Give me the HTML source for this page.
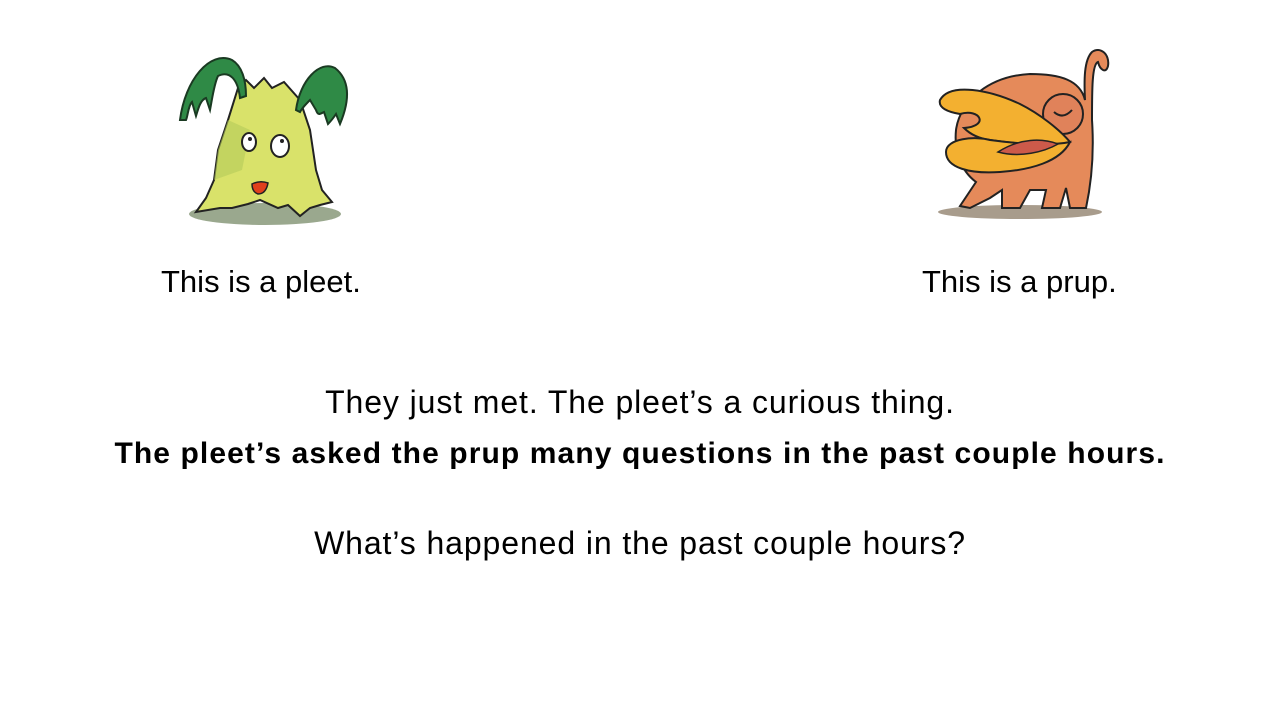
<!DOCTYPE html>
<html><head><meta charset="utf-8"><style>
body{margin:0;width:1280px;height:720px;background:#fff;position:relative;overflow:hidden;font-family:"Liberation Sans",Arial,sans-serif;color:#000}
.t{position:absolute;white-space:nowrap;font-size:32px;line-height:1;letter-spacing:0.9px}
.c{left:0;width:1280px;text-align:center}
</style></head><body>
<svg style="position:absolute;left:160px;top:40px" width="200" height="190" viewBox="0 0 200 190">
<ellipse cx="105" cy="174" rx="76" ry="11" fill="#9aa88e"/>
<path d="M78 48 L86 40 L94 48 L104 38 L112 48 L124 42 L140 60 L150 90 L156 130 L162 150 L172 162 L160 165 L150 168 L140 176 L128 165 L118 168 L100 160 L88 164 L72 168 L60 168 L36 172 L46 158 L54 140 L58 110 L68 80 Z" fill="#d9e26a" stroke="#222" stroke-width="2"/>
<path d="M68 80 L58 110 L54 140 L82 130 L90 90 Z" fill="#b4cc5a" opacity=".6"/>
<path d="M20 80 C25 40 50 10 72 20 C82 26 86 40 86 56 L80 58 C78 40 70 30 58 36 C54 44 52 60 50 70 L46 58 C40 60 38 70 36 76 L32 62 C28 66 28 76 26 80 Z" fill="#2f8a46" stroke="#1a3a22" stroke-width="2"/>
<path d="M136 70 C140 40 160 20 175 28 C190 40 190 60 180 84 L176 74 C172 80 170 82 168 84 L164 72 C160 74 158 76 156 70 L150 60 C146 64 142 68 140 72 Z" fill="#2f8a46" stroke="#1a3a22" stroke-width="2"/>
<ellipse cx="89" cy="102" rx="7" ry="9" fill="#fff" stroke="#222" stroke-width="2"/>
<ellipse cx="120" cy="106" rx="9" ry="11" fill="#fff" stroke="#222" stroke-width="2"/>
<circle cx="90" cy="99" r="2" fill="#222"/><circle cx="122" cy="101" r="2" fill="#222"/>
<path d="M92 144 Q100 140 108 143 Q106 154 98 154 Q92 152 92 144Z" fill="#e0401c" stroke="#222" stroke-width="1.5"/>
</svg>
<svg style="position:absolute;left:920px;top:40px" width="200" height="190" viewBox="0 0 200 190">
<ellipse cx="100" cy="172" rx="82" ry="7" fill="#a89c8c"/>
<path d="M165 60 C164 40 164 20 172 12 C180 6 190 14 188 26 C186 34 180 30 178 22 C172 24 172 50 172 80 C174 110 172 140 166 168 L150 168 L146 148 L140 168 L122 168 L126 150 L110 150 L100 168 L82 168 L82 150 L70 158 L50 168 L40 166 L56 142 C40 130 34 110 36 90 C40 60 70 36 110 34 C140 34 160 40 165 60 Z" fill="#e58a5a" stroke="#222" stroke-width="2"/>
<circle cx="143" cy="74" r="20" fill="#e0825a" stroke="#222" stroke-width="2"/>
<path d="M134 72 Q143 80 152 70" fill="none" stroke="#222" stroke-width="2"/>
<path d="M20 60 C30 42 70 50 100 64 C120 74 140 90 150 102 C130 108 100 104 70 100 C55 98 48 92 44 88 C70 86 60 68 40 74 C28 72 18 68 20 60Z" fill="#f3b030" stroke="#222" stroke-width="2"/>
<path d="M26 112 C26 98 56 96 70 100 C100 104 130 106 150 102 C140 122 110 130 80 132 C50 134 26 128 26 112Z" fill="#f3b030" stroke="#222" stroke-width="2"/>
<path d="M78 112 C100 98 122 98 138 104 C124 112 100 118 78 112Z" fill="#cc5a4a" stroke="#222" stroke-width="1.5"/>
</svg>
<div class="t" style="left:161px;top:266px;font-size:31px;letter-spacing:0">This is a pleet.</div>
<div class="t" style="left:922px;top:266px;font-size:31px;letter-spacing:0">This is a prup.</div>
<div class="t c" style="top:386px">They just met. The pleet’s a curious thing.</div>
<div class="t c" style="top:439px;font-weight:bold;font-size:30px;letter-spacing:1.1px">The pleet’s asked the prup many questions in the past couple hours.</div>
<div class="t c" style="top:527px">What’s happened in the past couple hours?</div>
</body></html>
